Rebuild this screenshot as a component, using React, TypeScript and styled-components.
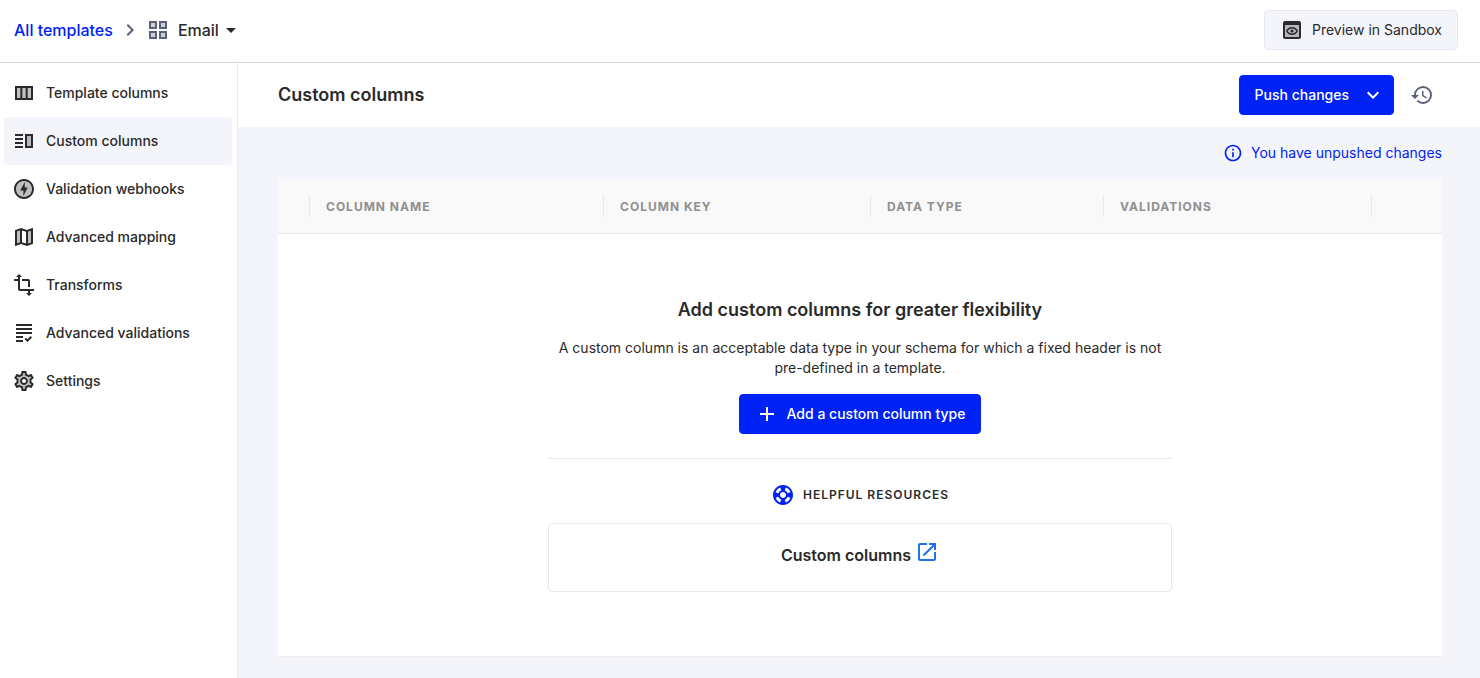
import React from 'react';
import styled, { createGlobalStyle, css } from 'styled-components';
import type { IconType } from 'react-icons';
import {
  MdAdd,
  MdArrowDropDown,
  MdChevronRight,
  MdExpandMore,
  MdGrading,
  MdHistory,
  MdOpenInNew,
  MdOutlineGridView,
  MdOutlineInfo,
  MdOutlineMap,
  MdOutlineOfflineBolt,
  MdOutlinePreview,
  MdOutlineSettings,
  MdOutlineVerticalSplit,
  MdOutlineViewColumn,
  MdSupport,
  MdTransform,
} from 'react-icons/md';

const color = {
  blue: '#0022f5',
  link: '#2170f0',
  ink: '#2a2a2a',
  slate: '#5c6079',
  grey: '#8f8f8f',
  wash: '#f4f5fb',
  line: '#e8e8e8',
  rule: '#d3d4e0',
};

const GlobalStyle = createGlobalStyle`
  *, *::before, *::after { box-sizing: border-box; }
  body {
    margin: 0;
    background: #fff;
    color: ${color.ink};
    font-family: Inter, "Liberation Sans", sans-serif;
    font-size: 14px;
    line-height: 20px;
  }
  h1, h2, p { margin: 0; }
  a { color: inherit; text-decoration: none; }
  svg { flex: none; display: block; }
  button { font: inherit; cursor: pointer; }
`;

const Page = styled.div`
  display: flex;
  flex-direction: column;
  min-height: 100vh;
`;

const TopBar = styled.header`
  display: flex;
  align-items: center;
  justify-content: space-between;
  padding: 10px 22px 12px 14px;
  border-bottom: 1px solid ${color.rule};
`;

const Breadcrumb = styled.nav`
  display: flex;
  align-items: center;
  font-size: 16px;
  font-weight: 500;
`;

const CrumbLink = styled.a`
  && { color: ${color.blue}; }
`;

const CrumbArrow = styled(MdChevronRight)`
  margin: 0 4px 0 5px;
  color: ${color.slate};
`;

const TemplatePicker = styled.button`
  display: flex;
  align-items: center;
  padding: 0;
  border: 0;
  background: none;
  color: inherit;

  svg:first-child { margin-right: 8px; color: ${color.slate}; }
`;

const Button = styled.button<{ $primary?: boolean }>`
  display: flex;
  align-items: center;
  height: 40px;
  padding: 0 15px;
  border: 1px solid #e7e7f3;
  border-radius: 4px;
  background: ${color.wash};
  color: ${color.ink};
  ${(p) =>
    p.$primary &&
    css`
      border-color: ${color.blue};
      background: ${color.blue};
      color: #fff;
      font-weight: 500;
    `}
`;

const MenuButton = styled(Button)`
  gap: 12px;
  padding-right: 8px;
`;

const IconButton = styled.button`
  display: grid;
  place-items: center;
  width: 40px;
  height: 40px;
  padding: 0;
  border: 0;
  background: none;
  color: ${color.slate};
`;

const Body = styled.div`
  display: flex;
  flex: 1;
`;

const Sidebar = styled.nav`
  flex: none;
  width: 238px;
  padding: 6px 5px 6px 4px;
  border-right: 1px solid #ebebf2;
`;

const SideLink = styled.a<{ $active?: boolean }>`
  display: flex;
  align-items: center;
  gap: 10px;
  height: 48px;
  padding: 0 8px;
  border-radius: 4px;
  background: ${(p) => (p.$active ? color.wash : 'none')};
  font-weight: 500;
`;

const Main = styled.main`
  flex: 1;
  min-width: 0;
  background: ${color.wash};
`;

const TitleBar = styled.div`
  display: flex;
  align-items: center;
  justify-content: space-between;
  height: 64px;
  padding: 0 38px 0 40px;
  background: #fff;
`;

const Title = styled.h1`
  font-size: 18px;
  line-height: 24px;
  font-weight: 600;
`;

const Actions = styled.div`
  display: flex;
  gap: 8px;
`;

const Content = styled.div`
  padding: 14px 38px 22px 40px;
`;

const Notice = styled.div`
  display: flex;
  align-items: center;
  justify-content: flex-end;
  gap: 8px;
  height: 24px;
  margin-bottom: 14px;
  color: ${color.blue};
`;

const Table = styled.table`
  width: 100%;
  border-collapse: separate;
  border-spacing: 0;
  table-layout: fixed;
  background: #fff;
`;

const HeadCell = styled.th<{ $width?: string }>`
  width: ${(p) => p.$width ?? 'auto'};
  padding: 16px 0;
  border-bottom: 1px solid ${color.line};
  background: #f9f9f9;
  color: ${color.grey};
  text-align: left;
`;

const HeadLabel = styled.div`
  height: 22px;
  padding-left: 16px;
  border-right: 1px solid ${color.line};
  font-size: 12px;
  line-height: 24px;
  font-weight: 700;
  letter-spacing: 1px;
  text-transform: uppercase;
`;

const EmptyCell = styled.td`
  padding: 64px 16px;
  border-bottom: 1px solid #efeff3;
`;

const EmptyState = styled.div`
  display: flex;
  flex-direction: column;
  align-items: center;
  gap: 16px;
  max-width: 624px;
  margin: 0 auto;
  text-align: center;
`;

const EmptyTitle = styled.h2`
  font-size: 18px;
  line-height: 24px;
  font-weight: 600;
`;

const Resources = styled.section`
  display: flex;
  flex-direction: column;
  align-items: center;
  gap: 16px;
  width: 100%;
  margin-top: 8px;
  padding-top: 24px;
  border-top: 1px solid ${color.line};
`;

const ResourcesTitle = styled.h2`
  display: flex;
  align-items: center;
  gap: 8px;
  font-size: 12px;
  line-height: 24px;
  font-weight: 600;
  letter-spacing: 1px;
  text-transform: uppercase;

  svg { color: ${color.blue}; }
`;

const ResourceCard = styled.a`
  display: flex;
  align-items: flex-start;
  justify-content: center;
  gap: 4px;
  width: 100%;
  padding: 16px 16px 21px;
  border: 1px solid ${color.line};
  border-radius: 4px;
  font-size: 16px;
  line-height: 30px;
  font-weight: 600;

  svg { color: ${color.link}; }
`;

const IconLabel = styled.span`
  margin-left: 8px;
`;

type TwoToneProps = { icon: IconType; tint: string };

/* A Material outline icon over a light fill of its own colour. */
function TwoTone({ icon: Icon, tint }: TwoToneProps) {
  return (
    <svg width="24" height="24" viewBox="0 0 24 24" fill="currentColor" aria-hidden="true">
      <path d={tint} fillOpacity="0.3" fillRule="evenodd" />
      <Icon size={24} />
    </svg>
  );
}

const tints = {
  grid: 'M5 5h4v4H5zM15 5h4v4h-4zM5 15h4v4H5zM15 15h4v4h-4z',
  columns: 'M4 6h16v12H4z',
  split: 'M15 7h4v10h-4z',
  bolt: 'M12 4a8 8 0 1 0 0 16a8 8 0 0 0 0-16z',
  map: 'M5 18.3l3-1.15V5.45L5 6.46zM16 18.55l3-1.01V5.7l-3 1.16z',
  preview: 'M5 7h14v12H5z',
  gear: 'M17.45 11.27c.04.31.05.52.05.73s-.02.43-.05.73l-.14 1.13 1.97 1.54-.7 1.21-2.31-.93-.9.68c-.43.32-.84.56-1.25.73l-1.06.43-.36 2.48h-1.4l-.35-2.48-1.06-.43c-.43-.18-.83-.41-1.23-.71l-.91-.7-2.33.94-.7-1.21 1.97-1.54-.14-1.13a7 7 0 0 1 0-1.47l.14-1.13-1.97-1.54.7-1.21 2.31.93.9-.68c.43-.32.84-.56 1.25-.73l1.06-.43.36-2.48h1.39l.35 2.48 1.06.43c.43.18.83.41 1.23.71l.91.7 2.33-.94.7 1.21-1.96 1.55zM12 8a4 4 0 1 0 0 8a4 4 0 0 0 0-8z',
};

const sections = [
  { label: 'Template columns', icon: <TwoTone icon={MdOutlineViewColumn} tint={tints.columns} /> },
  { label: 'Custom columns', icon: <TwoTone icon={MdOutlineVerticalSplit} tint={tints.split} />, active: true },
  { label: 'Validation webhooks', icon: <TwoTone icon={MdOutlineOfflineBolt} tint={tints.bolt} /> },
  { label: 'Advanced mapping', icon: <TwoTone icon={MdOutlineMap} tint={tints.map} /> },
  { label: 'Transforms', icon: <MdTransform size={24} /> },
  { label: 'Advanced validations', icon: <MdGrading size={24} /> },
  { label: 'Settings', icon: <TwoTone icon={MdOutlineSettings} tint={tints.gear} /> },
];

const columns = [
  { label: '', width: '32px' },
  { label: 'Column name', width: '25.26%' },
  { label: 'Column key', width: '22.94%' },
  { label: 'Data type', width: '20.02%' },
  { label: 'Validations', width: '23.02%' },
];

export default function App() {
  return (
    <Page>
      <GlobalStyle />
      <TopBar>
        <Breadcrumb aria-label="Breadcrumb">
          <CrumbLink href="#templates">All templates</CrumbLink>
          <CrumbArrow size={24} />
          <TemplatePicker type="button">
            <TwoTone icon={MdOutlineGridView} tint={tints.grid} />
            Email
            <MdArrowDropDown size={24} />
          </TemplatePicker>
        </Breadcrumb>
        <Button type="button">
          <TwoTone icon={MdOutlinePreview} tint={tints.preview} />
          <IconLabel>Preview in Sandbox</IconLabel>
        </Button>
      </TopBar>
      <Body>
        <Sidebar aria-label="Template sections">
          {sections.map((s) => (
            <SideLink key={s.label} href="#section" $active={s.active}>
              {s.icon}
              {s.label}
            </SideLink>
          ))}
        </Sidebar>
        <Main>
          <TitleBar>
            <Title>Custom columns</Title>
            <Actions>
              <MenuButton type="button" $primary>
                Push changes
                <MdExpandMore size={24} />
              </MenuButton>
              <IconButton type="button" aria-label="History">
                <MdHistory size={24} />
              </IconButton>
            </Actions>
          </TitleBar>
          <Content>
            <Notice>
              <MdOutlineInfo size={20} />
              You have unpushed changes
            </Notice>
            <Table>
              <thead>
                <tr>
                  {columns.map((c) => (
                    <HeadCell key={c.label} $width={c.width} scope="col">
                      <HeadLabel>{c.label}</HeadLabel>
                    </HeadCell>
                  ))}
                  <HeadCell scope="col" />
                </tr>
              </thead>
              <tbody>
                <tr>
                  <EmptyCell colSpan={6}>
                    <EmptyState>
                      <EmptyTitle>Add custom columns for greater flexibility</EmptyTitle>
                      <p>
                        A custom column is an acceptable data type in your schema for which a fixed header is not
                        pre-defined in a template.
                      </p>
                      <Button type="button" $primary>
                        <MdAdd size={24} />
                        <IconLabel>Add a custom column type</IconLabel>
                      </Button>
                      <Resources>
                        <ResourcesTitle>
                          <MdSupport size={24} />
                          Helpful resources
                        </ResourcesTitle>
                        <ResourceCard href="#custom-columns">
                          Custom columns
                          <MdOpenInNew size={24} />
                        </ResourceCard>
                      </Resources>
                    </EmptyState>
                  </EmptyCell>
                </tr>
              </tbody>
            </Table>
          </Content>
        </Main>
      </Body>
    </Page>
  );
}
